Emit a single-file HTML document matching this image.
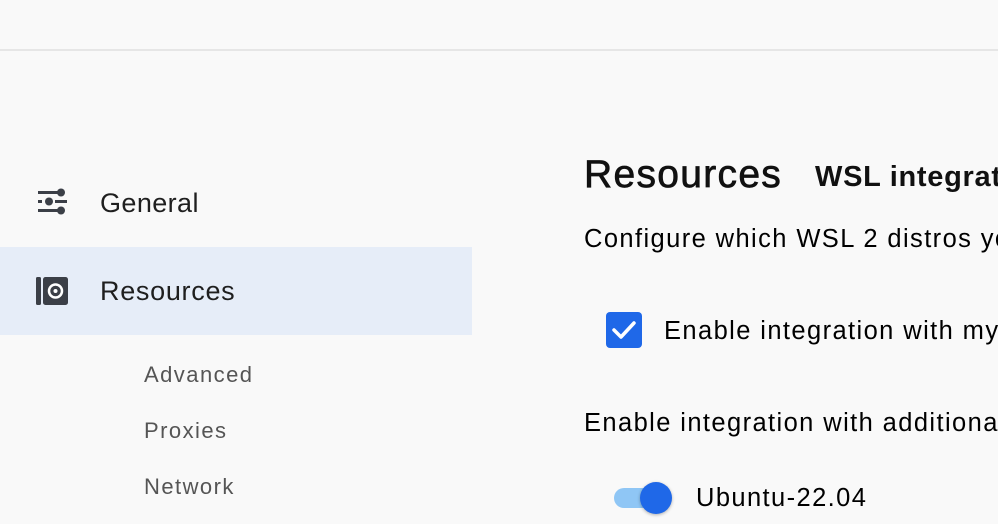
<!DOCTYPE html><html><head><style>
html,body{margin:0;width:998px;height:524px;overflow:hidden}
body{background:#f9f9f9;font-family:"Liberation Sans",sans-serif;position:relative;color:#000}
.w{position:absolute;left:0;top:0;width:998px;height:524px;overflow:hidden}
.a{position:absolute;white-space:nowrap}
.t{letter-spacing:0.7px}
.b{font-size:25.5px;letter-spacing:1.4px}
.s{font-size:22px;color:#555;letter-spacing:1.45px}
</style></head><body><div class="w">
<div class="a" style="left:0;top:0;width:998px;height:49px;border-bottom:2px solid #e6e6e6"></div>
<div class="a" style="left:0;top:247px;width:472px;height:88px;background:#e6edf8"></div>
<svg class="a" style="left:36px;top:188px" width="32" height="28" viewBox="0 0 32 28">
<g fill="#3b3f47"><rect x="2" y="3" width="20" height="3"/><circle cx="25" cy="4.5" r="4"/>
<rect x="2" y="12" width="4" height="3"/><circle cx="13" cy="13.5" r="4"/><rect x="19" y="12" width="12" height="3"/>
<rect x="2" y="21" width="20" height="3"/><circle cx="25" cy="22.5" r="4"/></g></svg>
<svg class="a" style="left:35px;top:276px" width="34" height="30" viewBox="0 0 34 30">
<rect x="1" y="1" width="5" height="28" rx="1.5" fill="#3b3f47"/><rect x="8" y="1" width="25" height="28" rx="2.5" fill="#3b3f47"/>
<circle cx="20.5" cy="15" r="6.5" fill="none" stroke="#fff" stroke-width="2.5"/><circle cx="20.5" cy="15" r="2" fill="#fff"/></svg>
<div class="a t" style="left:100px;top:188px;font-size:27px;color:#1f1f1f;letter-spacing:0.4px">General</div>
<div class="a t" style="left:100px;top:276px;font-size:27px;color:#1f1f1f">Resources</div>
<div class="a s" style="left:144px;top:362px">Advanced</div>
<div class="a s" style="left:144px;top:418px">Proxies</div>
<div class="a s" style="left:144px;top:474px">Network</div>
<div class="a" style="left:584px;top:153px;font-size:39px;color:#111;letter-spacing:1.3px;-webkit-text-stroke:0.7px #111">Resources</div>
<div class="a" style="left:815px;top:161px;font-size:29px;font-weight:bold;color:#111;letter-spacing:0.7px">WSL integration</div>
<div class="a b" style="left:584px;top:225px">Configure which WSL 2 distros you want to access Docker from.</div>
<div class="a" style="left:606px;top:312px;width:36px;height:36px;border-radius:4px;background:#1f68e8"></div>
<svg class="a" style="left:606px;top:312px" width="36" height="36"><path d="M8 18l7 7 13-14" fill="none" stroke="#fff" stroke-width="3.5" stroke-linecap="round" stroke-linejoin="round"/></svg>
<div class="a b" style="left:664px;top:317px">Enable integration with my default WSL distro</div>
<div class="a b" style="left:584px;top:409px">Enable integration with additional distros:</div>
<div class="a" style="left:614px;top:488px;width:50px;height:20px;border-radius:10px;background:#8fc6f5"></div>
<div class="a" style="left:640px;top:482px;width:32px;height:32px;border-radius:50%;background:#1f68e8;box-shadow:0 1px 3px rgba(0,0,0,.3)"></div>
<div class="a b" style="left:696px;top:484px">Ubuntu-22.04</div>
</div></body></html>
